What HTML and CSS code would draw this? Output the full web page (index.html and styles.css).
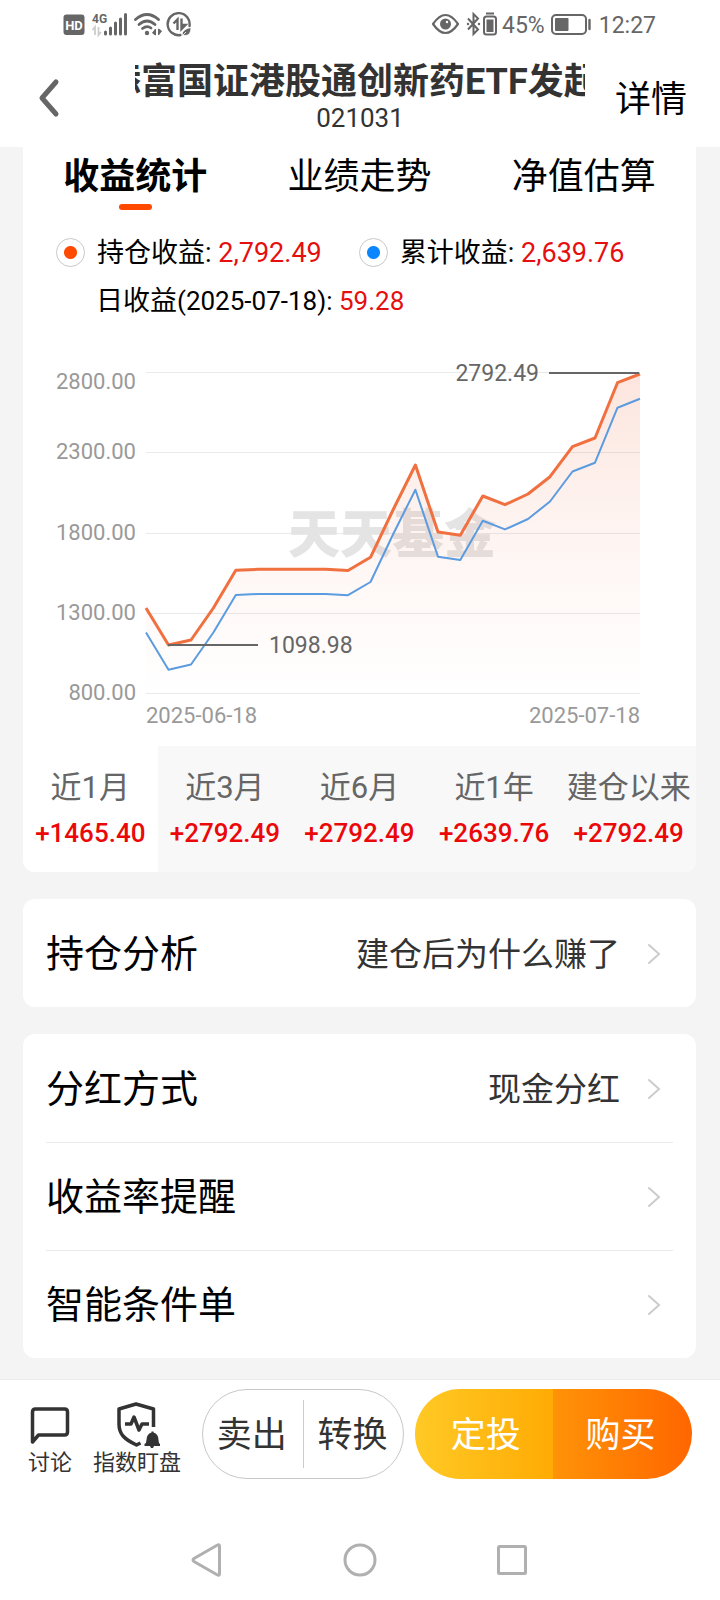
FILE: index.html
```html
<!DOCTYPE html>
<html lang="zh-CN">
<head>
<meta charset="utf-8">
<meta name="viewport" content="width=device-width, initial-scale=1">
<title>基金持仓详情</title>
<link rel="stylesheet" href="styles.css">
</head>
<body>
<div class="status">
  <svg class="status-left" width="130" height="26" viewBox="63 12 130 26" aria-hidden="true">
    <rect x="63.500" y="14.500" width="21" height="20.500" rx="3" fill="#666"/>
    <text x="74" y="30" text-anchor="middle" class="hd">HD</text>
    <text x="92" y="23" class="net">4G</text>
    <path d="M95 35v-8l-2.500 3M98.500 27v8l2.500-3" fill="none" stroke="#ccc" stroke-width="1.800"/>
    <path d="M105.500 32v2M110.500 28v6M115.500 23v11M120.500 19v15M125.500 14.500v19.500" stroke="#666" stroke-width="3" stroke-linecap="round"/>
    <g fill="none" stroke="#666" stroke-width="2.800" stroke-linecap="round">
      <path d="M135.500 19.500Q147 9.500 158.500 19.500"/>
      <path d="M139 24.500Q147 17.500 155 24.500"/>
      <path d="M142.500 28.500Q147 25 151 28"/>
    </g>
    <circle cx="147" cy="33" r="2.200" fill="#666"/>
    <path d="M155.500 35v-6l-3 4zM158.500 29v6l3-4z" fill="#666" stroke="#666"/>
    <path d="M180.500 35A11 11 0 1 1 189.500 26" fill="none" stroke="#666" stroke-width="2.400" stroke-linecap="round"/>
    <path d="M177.500 30V19.500l-4 4M181.500 18.500V29l4-4h-3" fill="none" stroke="#666" stroke-width="2.400"/>
    <path d="M182 35q0-6 9-7.500q0 8-6 8zM181 37l5-5" fill="#666" stroke="#fff" stroke-width=".8"/>
  </svg>
  <div class="status-right">
    <svg width="66" height="26" viewBox="431 12 66 26" aria-hidden="true">
      <path d="M433 24Q445.500 6 458 24Q445.500 42 433 24z" fill="none" stroke="#666" stroke-width="2.200" stroke-linejoin="round"/>
      <circle cx="445.500" cy="24" r="5.500" fill="#666"/><circle cx="447" cy="22" r="1.200" fill="#fff"/>
      <path d="M468 18.500l10 11-4.500 4.500V14l4.500 4.500-10 11" fill="none" stroke="#666" stroke-width="2"/>
      <circle cx="468" cy="24" r="1.200" fill="#666"/><circle cx="479" cy="24" r="1.200" fill="#666"/>
      <path d="M486 13.500h8" stroke="#666" stroke-width="2"/>
      <rect x="484" y="16.500" width="12" height="18" rx="2.500" fill="none" stroke="#666" stroke-width="2"/>
      <rect x="486.500" y="19.500" width="7" height="12.500" fill="#666"/>
    </svg>
    <span>45%</span>
    <svg width="42" height="26" viewBox="550 12 42 26" aria-hidden="true">
      <rect x="552" y="15" width="34" height="19" rx="4" fill="none" stroke="#666" stroke-width="2"/>
      <rect x="555" y="18" width="13.500" height="13" rx="1" fill="#666"/>
      <path d="M589.500 20v9" stroke="#666" stroke-width="2.400" stroke-linecap="round"/>
    </svg>
    <span>12:27</span>
  </div>
</div>

<header class="header">
  <button class="back" type="button" aria-label="返回">
    <svg width="22" height="40" viewBox="0 0 22 40"><path d="M18 4L4 20l14 16" fill="none" stroke="#666" stroke-width="5" stroke-linecap="round" stroke-linejoin="round"/></svg>
  </button>
  <div class="heading">
    <h1 class="title">添富国证港股通创新药ETF发起</h1>
    <p class="code">021031</p>
  </div>
  <a class="detail" href="#">详情</a>
</header>

<main class="main">
  <section class="card">
    <nav class="tabs">
      <button class="tab tab-on" type="button">收益统计</button>
      <button class="tab" type="button">业绩走势</button>
      <button class="tab" type="button">净值估算</button>
    </nav>
    <div class="legend">
      <div class="legend-row">
        <label class="series"><input class="dot dot-hold" type="checkbox" checked><span>持仓收益: <b class="num">2,792.49</b></span></label>
        <label class="series"><input class="dot dot-total" type="checkbox" checked><span>累计收益: <b class="num">2,639.76</b></span></label>
      </div>
      <p class="legend-row daily"><span>日收益<span class="date">(2025-07-18): <b class="num">59.28</b></span></span></p>
    </div>
    <svg class="chart" viewBox="23 325 673 421" role="img" aria-label="收益走势图">
      <defs>
        <linearGradient id="area" x1="0" y1="374" x2="0" y2="693" gradientUnits="userSpaceOnUse">
          <stop offset="0" stop-color="#f0683c" stop-opacity=".17"/>
          <stop offset=".5" stop-color="#f0683c" stop-opacity=".07"/>
          <stop offset="1" stop-color="#f0683c" stop-opacity="0"/>
        </linearGradient>
      </defs>
      <path d="M146 372.500H640M146 452.500H640M146 533.500H640M146 613.500H640M146 693.500H640" stroke="#e9e9e9"/>
      <text class="watermark" x="392" y="553" text-anchor="middle">天天基金</text>
      <path fill="url(#area)" d="M146 608L168.500 645 191 640 213.400 608 235.800 570.300 258 569.300 325.600 569.300 348 570.500 370.500 557.300 393 510 415.400 465 438 532 460.300 535.300 482.800 496 505 504.700 528 494 550 476.700 572.500 446.700 595 438 617.500 382.700 640 374V693H146z"/>
      <path fill="none" stroke="#5b9be0" stroke-width="2" stroke-linejoin="round" d="M146 632.500L168.500 669.700 191 664.500 213.400 632.500 235.800 595 258 594 325.600 594 348 595.200 370.500 582 393 534.500 415.400 489.700 438 556.700 460.300 560 482.800 520.700 505 529.400 528 519 550 501.500 572.500 471.500 595 462.700 617.500 407.700 640 398.700"/>
      <path fill="none" stroke="#f07040" stroke-width="3" stroke-linejoin="round" d="M146 608L168.500 645 191 640 213.400 608 235.800 570.300 258 569.300 325.600 569.300 348 570.500 370.500 557.300 393 510 415.400 465 438 532 460.300 535.300 482.800 496 505 504.700 528 494 550 476.700 572.500 446.700 595 438 617.500 382.700 640 374"/>
      <path d="M549 373H639M168 645H258" stroke="#666" stroke-width="2"/>
      <g class="axis" text-anchor="end">
        <text x="136" y="389">2800.00</text>
        <text x="136" y="459">2300.00</text>
        <text x="136" y="540">1800.00</text>
        <text x="136" y="620">1300.00</text>
        <text x="136" y="700">800.00</text>
        <text x="640" y="723">2025-07-18</text>
      </g>
      <text class="axis" x="146" y="723">2025-06-18</text>
      <text class="mark" x="539" y="381" text-anchor="end">2792.49</text>
      <text class="mark" x="269" y="653">1098.98</text>
    </svg>
    <div class="periods">
      <button class="period period-on" type="button"><span>近1月</span><b>+1465.40</b></button>
      <button class="period" type="button"><span>近3月</span><b>+2792.49</b></button>
      <button class="period" type="button"><span>近6月</span><b>+2792.49</b></button>
      <button class="period" type="button"><span>近1年</span><b>+2639.76</b></button>
      <button class="period" type="button"><span>建仓以来</span><b>+2792.49</b></button>
    </div>
  </section>

  <section class="card list">
    <a class="row" href="#"><span class="row-name">持仓分析</span><span class="row-value">建仓后为什么赚了</span><svg class="chev" viewBox="0 0 14 22"><path d="M2 2l10 9-10 9"/></svg></a>
  </section>

  <section class="card list">
    <a class="row" href="#"><span class="row-name">分红方式</span><span class="row-value">现金分红</span><svg class="chev" viewBox="0 0 14 22"><path d="M2 2l10 9-10 9"/></svg></a>
    <a class="row" href="#"><span class="row-name">收益率提醒</span><svg class="chev" viewBox="0 0 14 22"><path d="M2 2l10 9-10 9"/></svg></a>
    <a class="row" href="#"><span class="row-name">智能条件单</span><svg class="chev" viewBox="0 0 14 22"><path d="M2 2l10 9-10 9"/></svg></a>
  </section>
</main>

<footer class="footer">
  <div class="actions">
    <button class="tool" type="button">
      <svg width="42" height="46" viewBox="0 0 42 46"><path d="M3.500 40V10q0-3 3-3h29q3 0 3 3v20q0 3-3 3H9.500z" fill="none" stroke="#333" stroke-width="3.500" stroke-linejoin="round"/></svg>
      <span>讨论</span>
    </button>
    <button class="tool" type="button">
      <svg width="46" height="46" viewBox="0 0 46 46">
        <g fill="none" stroke="#333" stroke-width="3.500" stroke-linejoin="round">
          <path d="M39.500 25V7L22 2 5 7v15c0 10 5 15 17.500 21l4-2"/>
          <path d="M11 22h6l3-7 5 13 3-6h7"/>
        </g>
        <path d="M30.500 44v-2q2-1 2-4 0-6 5-7.500v-1h2v1q5 1.500 5 7.500 0 3 1.500 4v2h-6l-1 2h-2l-1-2z" fill="#333"/>
      </svg>
      <span>指数盯盘</span>
    </button>
    <div class="pill pill-line">
      <button class="act" type="button">卖出</button>
      <i class="split"></i>
      <button class="act" type="button">转换</button>
    </div>
    <div class="pill pill-fill">
      <button class="act act-plan" type="button">定投</button>
      <button class="act act-buy" type="button">购买</button>
    </div>
  </div>
  <nav class="sysnav">
    <button type="button" aria-label="后退"><svg width="34" height="36" viewBox="0 0 34 36"><path d="M28.500 4v28q0 2-2 1L3 19.500q-2-1.500 0-3L26.500 3q2-1 2 1z" fill="none" stroke="#b0b0b0" stroke-width="3"/></svg></button>
    <button type="button" aria-label="主页"><svg width="34" height="36" viewBox="0 0 34 36"><circle cx="17" cy="18" r="15" fill="none" stroke="#b0b0b0" stroke-width="3"/></svg></button>
    <button type="button" aria-label="最近任务"><svg width="34" height="36" viewBox="0 0 34 36"><rect x="3.500" y="4.500" width="27" height="27" rx="1" fill="none" stroke="#b0b0b0" stroke-width="3"/></svg></button>
  </nav>
</footer>
</body>
</html>
```
FILE: styles.css
```css
* {
  box-sizing: border-box;
}

body {
  margin: 0;
  min-height: 100vh;
  display: flex;
  flex-direction: column;
  background: #f4f4f4;
  color: #000;
  font-family: Roboto, "Noto Sans CJK SC", sans-serif;
}

h1,
p {
  margin: 0;
}

b {
  font-weight: inherit;
}

button {
  margin: 0;
  padding: 0;
  border: 0;
  background: none;
  color: inherit;
  font: inherit;
}

a {
  color: inherit;
  text-decoration: none;
}

svg {
  display: block;
}

/* status bar */
.status {
  height: 48px;
  padding: 2px 64px 0 63px;
  display: flex;
  align-items: center;
  justify-content: space-between;
  background: #fff;
  color: #666;
  font-size: 23px;
}

.status-right {
  display: flex;
  align-items: center;
  gap: 5px;
}

.status-right span:last-child {
  padding-left: 2px;
}

.hd {
  font-size: 13px;
  font-weight: 700;
  fill: #fff;
}

.net {
  font-size: 12px;
  font-weight: 700;
  fill: #666;
}

/* header */
.header {
  display: flex;
  align-items: center;
  padding: 14px 33px 13px 38px;
  background: #fff;
}

.back {
  width: 97px;
}

.heading {
  flex: 1;
  min-width: 0;
  text-align: center;
  color: #333;
}

.title {
  overflow: hidden;
  white-space: nowrap;
  text-align: left;
  text-indent: -30px;
  font-size: 36px;
  line-height: 40px;
  font-weight: 700;
}

.code {
  font-size: 26px;
  line-height: 32px;
}

.detail {
  width: 102px;
  padding-top: 4px;
  text-align: right;
  font-size: 36px;
  line-height: 40px;
}

/* cards */
.main {
  flex: 1;
  display: flex;
  flex-direction: column;
  gap: 27px;
  padding: 0 24px 21px 23px;
}

.card {
  overflow: hidden;
  border-radius: 12px;
  background: #fff;
}

.card:first-child {
  border-radius: 0 0 12px 12px;
}

.tabs {
  display: grid;
  grid-template-columns: repeat(3, 1fr);
}

.tab {
  display: flex;
  flex-direction: column;
  align-items: center;
  padding-top: 3px;
  font-size: 36px;
  line-height: 54px;
}

.tab::after {
  content: "";
  width: 33px;
  height: 6px;
  border-radius: 3px;
}

.tab-on {
  font-weight: 700;
}

.tab-on::after {
  background: #ff4800;
}

.legend {
  padding: 18px 0 1px 33px;
  font-size: 27px;
  line-height: 38px;
}

.legend-row {
  height: 48px;
  display: flex;
  align-items: center;
  gap: 37px;
}

.daily {
  padding: 2px 0 0 40px;
}

.series {
  display: flex;
  align-items: center;
  gap: 12px;
}

.series span {
  padding-top: 2px;
}

.num {
  color: #e60f0f;
}

.date {
  font-size: 26px;
}

.dot {
  appearance: none;
  width: 29px;
  height: 29px;
  margin: 0;
  border: 1px solid #c8c8c8;
  border-radius: 50%;
}

.dot-hold {
  background: radial-gradient(circle, #ff4800 6px, #fff 7px);
}

.dot-total {
  background: radial-gradient(circle, #0c86ff 6px, #fff 7px);
}

.chart {
  width: 100%;
  height: auto;
}

.axis {
  font-size: 22px;
  fill: #999;
}

.mark {
  font-size: 23px;
  fill: #666;
}

.watermark {
  font-size: 52px;
  font-weight: 900;
  fill: #e4e4e4;
}

.periods {
  display: grid;
  grid-template-columns: repeat(5, 1fr);
  background: #f8f8f8;
}

.period {
  display: flex;
  flex-direction: column;
  align-items: center;
  gap: 2px;
  padding: 21px 0 17px;
  white-space: nowrap;
}

.period-on {
  background: #fff;
}

.period span {
  font-size: 31px;
  line-height: 42px;
  color: #666;
}

.period b {
  font-size: 26px;
  line-height: 44px;
  font-weight: 500;
  color: #ea0808;
}

.list {
  padding: 0 23px;
}

.row {
  height: 108px;
  display: flex;
  align-items: center;
  padding: 1px 12px 0 0;
  line-height: 52px;
}

.row + .row {
  border-top: 1px solid #ebebeb;
}

.row-name {
  flex: 1;
  font-size: 38px;
}

.row-value {
  padding: 2px 27px 0 0;
  font-size: 33px;
  color: #333;
}

.chev {
  width: 14px;
  height: 22px;
  fill: none;
  stroke: #ccc;
  stroke-width: 2;
  stroke-linecap: round;
}

/* bottom bar */
.footer {
  border-top: 1px solid #ececec;
  background: #fff;
}

.actions {
  display: flex;
  padding: 9px 28px 0;
}

.tool {
  display: flex;
  flex-direction: column;
  align-items: center;
  padding-top: 13px;
  margin-right: 21px;
  font-size: 22px;
  line-height: 30px;
  color: #333;
  white-space: nowrap;
}

.pill {
  height: 90px;
  display: flex;
  align-items: center;
  overflow: hidden;
  border-radius: 45px;
  font-size: 35px;
  line-height: 50px;
}

.pill-line {
  flex: 201;
  margin-right: 11px;
  border: 1px solid #c8c8c8;
  color: #333;
}

.pill-fill {
  flex: 278;
  color: #fff;
}

.act {
  flex: 1;
  height: 100%;
  padding: 3px 2px 0 0;
}

.split {
  width: 1px;
  height: 68px;
  background: #ccc;
}

.act-plan {
  padding: 3px 0 0 3px;
  background: linear-gradient(90deg, #ffc925, #ffab04);
}

.act-buy {
  padding: 3px 4px 0 0;
  background: linear-gradient(90deg, #ff9307, #ff6600);
}

.sysnav {
  display: flex;
  justify-content: center;
  gap: 118px;
  padding: 63px 0 22px;
}
```
